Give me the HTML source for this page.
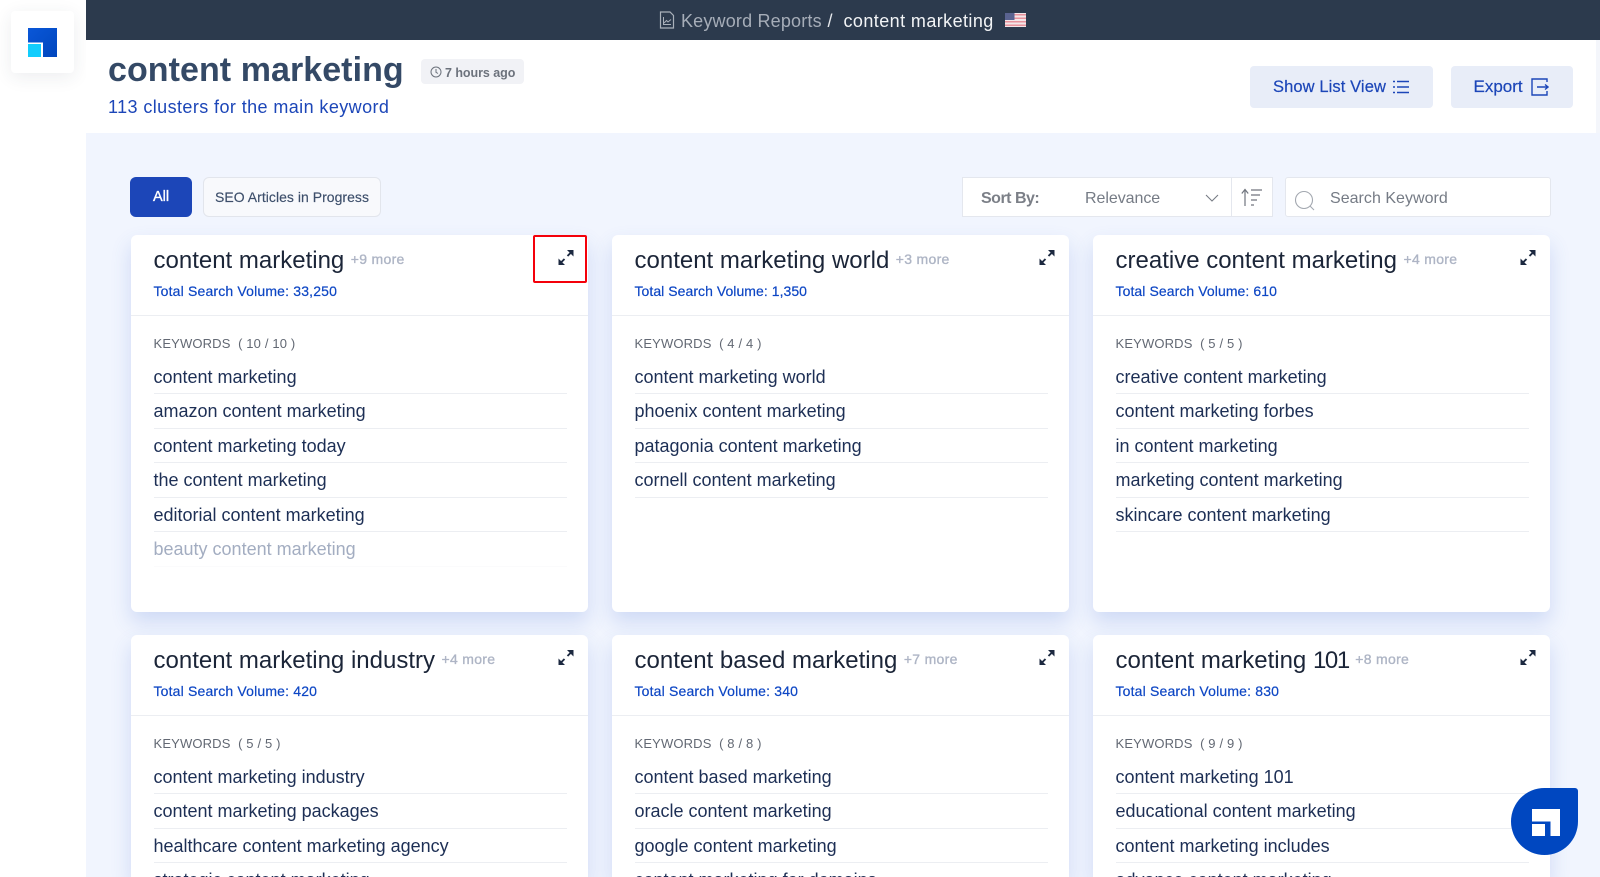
<!DOCTYPE html>
<html><head><meta charset="utf-8"><title>content marketing</title>
<style>
*{box-sizing:border-box;margin:0;padding:0}
html,body{width:1600px;height:877px;overflow:hidden;background:#f1f5fe;font-family:"Liberation Sans",sans-serif}
#w{position:absolute;left:0;top:0;width:1600px;height:877px;overflow:hidden;background:#f1f5fe}
.a{position:absolute;white-space:nowrap}
.card{position:absolute;width:457px;height:377px;background:#fff;border-radius:6px;box-shadow:0 10px 20px rgba(60,100,205,.19);overflow:hidden}
.card.s{height:242px;border-radius:6px 6px 0 0}
.t{position:absolute;left:22.500px;top:11px;line-height:30px;font-size:24px;color:#1b2538;white-space:nowrap}
.t span{font-size:14px;color:#aeb5c5;-webkit-text-stroke:.35px #aeb5c5;margin-left:6.500px;position:relative;top:-4.500px;letter-spacing:.3px}
.t i{font-style:normal;letter-spacing:-1.400px}
.v{position:absolute;left:22.500px;top:46px;line-height:20px;font-size:14px;color:#0d46c4;letter-spacing:.17px;-webkit-text-stroke:.2px #0d46c4;white-space:nowrap}
.hr{position:absolute;left:0;right:0;top:80px;height:1px;background:#eceef2}
.k{position:absolute;left:22.500px;top:98.500px;line-height:20px;font-size:13px;color:#626873;white-space:nowrap;letter-spacing:.15px}
.e{position:absolute;left:426px;top:13px}
ul{position:absolute;left:22.500px;top:124.500px;width:413px;list-style:none}
.s ul{height:117.500px;overflow:hidden}
li{height:34.500px;line-height:35.500px;font-size:18px;color:#1d2f55;border-bottom:1px solid #eceef2;white-space:nowrap}
li.f{color:#a3adc1;border-color:#fbfbfc}
</style></head><body><div id="w">
<svg width="0" height="0" style="position:absolute"><defs>
<symbol id="ex" viewBox="0 0 18 18"><path d="M2.500 15.500 7.500 10.500M10.500 7.500 15.500 2.500" stroke="#1c2940" stroke-width="1.900" fill="none"/><path d="M10 1.500H16.500V8ZM1.500 10l6.500 6.500H1.500Z" fill="#1c2940"/></symbol>
</defs></svg>

<div class="a" style="left:0;top:0;width:86px;height:877px;background:#fff"></div>
<div class="a" style="left:11px;top:11px;width:63px;height:62px;background:#fff;border-radius:4px;box-shadow:0 4px 18px rgba(40,50,80,.09)"></div>
<svg class="a" style="left:27px;top:28px" width="31" height="29" viewBox="0 0 31 29"><defs><linearGradient id="lg" x1="0" y1="0" x2="1" y2="1"><stop offset="0" stop-color="#0a57d8"/><stop offset="1" stop-color="#0046bd"/></linearGradient></defs><path d="M1 0H30V29H16V14.500H1Z" fill="url(#lg)"/><rect x="1" y="16" width="13" height="13" fill="#12cdfd"/></svg>

<div class="a" style="left:86px;top:0;width:1514px;height:40px;background:#2c3a4d"></div>
<div class="a" style="left:86px;top:40px;width:1510px;height:93px;background:#fff"></div>
<div class="a" style="left:1596px;top:40px;width:4px;height:93px;background:#f4f6fb"></div>

<svg class="a" style="left:659px;top:11px" width="16" height="18" viewBox="0 0 16 18" fill="none" stroke="#a9b0ba" stroke-width="1.200"><path d="M1.500 1H11l3.500 3.500V17H1.500Z"/><path d="M4.500 6V13.500H12M5 12 7.500 9.500 9 11 12 8.500" stroke-width="1"/></svg>
<div class="a" style="left:681px;top:10px;line-height:22px;font-size:18px;color:#a6adb8;letter-spacing:.18px">Keyword Reports</div>
<div class="a" style="left:827.500px;top:10px;line-height:22px;font-size:18px;color:#e5e8ec">/</div>
<div class="a" style="left:843.500px;top:10px;line-height:22px;font-size:18px;color:#f2f4f6;letter-spacing:.42px">content marketing</div>
<svg class="a" style="left:1005px;top:13px" width="21" height="14" viewBox="0 0 21 14"><rect width="21" height="14" fill="#f4e6e8"/><path d="M0 1h21v1.500H0ZM0 4.500h21V6H0ZM0 8h21v1.500H0ZM0 11.500h21V13H0Z" fill="#e8929c"/><rect width="9.500" height="7" fill="#5a6390"/></svg>

<div class="a" style="left:108px;top:49px;line-height:42px;font-size:34px;font-weight:700;color:#344966;letter-spacing:.06px">content marketing</div>
<div class="a" style="left:108px;top:95px;line-height:24px;font-size:18px;color:#1c46b8;letter-spacing:.41px">113 clusters for the main keyword</div>
<div class="a" style="left:420.500px;top:59px;width:103.500px;height:25px;background:#f1f2f6;border-radius:4px"></div>
<svg class="a" style="left:430px;top:66px" width="12" height="12" viewBox="0 0 12 12" fill="none" stroke="#6c727c" stroke-width="1"><circle cx="6" cy="6" r="5"/><path d="M6 3V6.300L8 7.500"/></svg>
<div class="a" style="left:445px;top:62.500px;line-height:20px;font-size:12.500px;font-weight:700;color:#6c727c;letter-spacing:-.05px">7 hours ago</div>

<div class="a" style="left:1250px;top:66px;width:183px;height:42px;background:#e8edf8;border-radius:4px"></div>
<div class="a" style="left:1273px;top:76px;line-height:22px;font-size:16.500px;color:#1c46b8;-webkit-text-stroke:.2px #1c46b8;letter-spacing:.1px">Show List View</div>
<svg class="a" style="left:1393px;top:79px" width="16" height="16" viewBox="0 0 16 16" stroke="#1c46b8" stroke-width="1.400" fill="none"><path d="M4 2.500H16M4 8H16M4 13.500H16M0 2.500H2M0 8H2M0 13.500H2"/></svg>
<div class="a" style="left:1451px;top:66px;width:122px;height:42px;background:#e8edf8;border-radius:4px"></div>
<div class="a" style="left:1473.500px;top:76px;line-height:22px;font-size:17px;color:#1c46b8;-webkit-text-stroke:.2px #1c46b8">Export</div>
<svg class="a" style="left:1531px;top:78px" width="18" height="18" viewBox="0 0 18 18" stroke="#1c46b8" stroke-width="1.400" fill="none"><path d="M16 4V1H1V17H16V13"/><path d="M6 9H17M14 6.500 17 9 14 11.500"/></svg>

<div class="a" style="left:130px;top:177px;width:62px;height:40px;background:#1c46b8;border-radius:6px;color:#fff;text-align:center;line-height:40px;font-size:14.500px;-webkit-text-stroke:.35px #fff">All</div>
<div class="a" style="left:203px;top:177px;width:178px;height:40px;background:#f8f9fc;border:1px solid #e2e5ec;border-radius:6px;color:#3d4f6b;line-height:38px;font-size:14px;padding-left:11px;-webkit-text-stroke:.15px #3d4f6b;letter-spacing:.03px">SEO Articles in Progress</div>

<div class="a" style="left:962px;top:177px;width:270px;height:40px;background:#fff;border:1px solid #e4e7ee"></div>
<div class="a" style="left:1231px;top:177px;width:42px;height:40px;background:#fff;border:1px solid #e4e7ee"></div>
<div class="a" style="left:981px;top:187.500px;line-height:21px;font-size:16px;font-weight:700;color:#7b7f87;letter-spacing:-.5px">Sort By:</div>
<div class="a" style="left:1085px;top:187.500px;line-height:21px;font-size:16px;color:#757b85;letter-spacing:-.05px">Relevance</div>
<svg class="a" style="left:1205px;top:193px" width="14" height="10" viewBox="0 0 14 10" fill="none" stroke="#777c85" stroke-width="1.100"><path d="M1 2 7 8 13 2"/></svg>
<svg class="a" style="left:1241px;top:188px" width="22" height="19" viewBox="0 0 22 19" fill="none" stroke="#70757e" stroke-width="1.200"><path d="M4 18V2M.8 5.500 4 1.500 7.200 5.500M10 2H21M10 7H19M10 12H16M10 17H13"/></svg>
<div class="a" style="left:1285px;top:177px;width:266px;height:40px;background:#fff;border:1px solid #e4e7ee;border-radius:3px"></div>
<svg class="a" style="left:1294px;top:190px" width="22" height="22" viewBox="0 0 22 22" fill="none" stroke="#a3a8b0" stroke-width="1.100"><circle cx="10" cy="10" r="8.500"/><path d="M16 16 20 20"/></svg>
<div class="a" style="left:1330px;top:187.500px;line-height:21px;font-size:16px;color:#757b85;letter-spacing:.03px">Search Keyword</div>

<div class="card" style="left:131px;top:235px"><div class="t">content marketing<span>+9 more</span></div><div class="v">Total Search Volume: 33,250</div><div class="hr"></div><div class="k">KEYWORDS &nbsp;( 10 / 10 )</div><svg class="e" width="18" height="19"><use href="#ex"/></svg>
<ul><li>content marketing</li><li>amazon content marketing</li><li>content marketing today</li><li>the content marketing</li><li>editorial content marketing</li><li class="f">beauty content marketing</li></ul></div>

<div class="card" style="left:612px;top:235px"><div class="t">content marketing world<span>+3 more</span></div><div class="v" style="letter-spacing:.05px">Total Search Volume: 1,350</div><div class="hr"></div><div class="k">KEYWORDS &nbsp;( 4 / 4 )</div><svg class="e" width="18" height="19"><use href="#ex"/></svg>
<ul><li>content marketing world</li><li>phoenix content marketing</li><li>patagonia content marketing</li><li>cornell content marketing</li></ul></div>

<div class="card" style="left:1093px;top:235px"><div class="t">creative content marketing<span>+4 more</span></div><div class="v" style="letter-spacing:.08px">Total Search Volume: 610</div><div class="hr"></div><div class="k">KEYWORDS &nbsp;( 5 / 5 )</div><svg class="e" width="18" height="19"><use href="#ex"/></svg>
<ul><li>creative content marketing</li><li>content marketing forbes</li><li>in content marketing</li><li>marketing content marketing</li><li>skincare content marketing</li></ul></div>

<div class="card s" style="left:131px;top:635px"><div class="t">content marketing industry<span>+4 more</span></div><div class="v">Total Search Volume: 420</div><div class="hr"></div><div class="k">KEYWORDS &nbsp;( 5 / 5 )</div><svg class="e" width="18" height="19"><use href="#ex"/></svg>
<ul><li>content marketing industry</li><li>content marketing packages</li><li>healthcare content marketing agency</li><li>strategic content marketing</li></ul></div>

<div class="card s" style="left:612px;top:635px"><div class="t">content based marketing<span>+7 more</span></div><div class="v">Total Search Volume: 340</div><div class="hr"></div><div class="k">KEYWORDS &nbsp;( 8 / 8 )</div><svg class="e" width="18" height="19"><use href="#ex"/></svg>
<ul><li>content based marketing</li><li>oracle content marketing</li><li>google content marketing</li><li>content marketing for domains</li></ul></div>

<div class="card s" style="left:1093px;top:635px"><div class="t">content marketing <i>101</i><span>+8 more</span></div><div class="v">Total Search Volume: 830</div><div class="hr"></div><div class="k">KEYWORDS &nbsp;( 9 / 9 )</div><svg class="e" width="18" height="19"><use href="#ex"/></svg>
<ul><li>content marketing 101</li><li>educational content marketing</li><li>content marketing includes</li><li>advance content marketing</li></ul></div>

<div class="a" style="left:533px;top:235px;width:54px;height:48px;border:2.500px solid #f4000a;border-radius:2px"></div>

<div class="a" style="left:1511px;top:788px;width:67px;height:67px;background:#0047c0;border-radius:50% 3px 50% 50%"></div>
<svg class="a" style="left:1532px;top:809px" width="28" height="27" viewBox="0 0 28 27" fill="#fff"><path d="M0 0H28V27H18.500V12.500H0Z"/><rect y="15" width="13" height="12"/></svg>
</div></body></html>
